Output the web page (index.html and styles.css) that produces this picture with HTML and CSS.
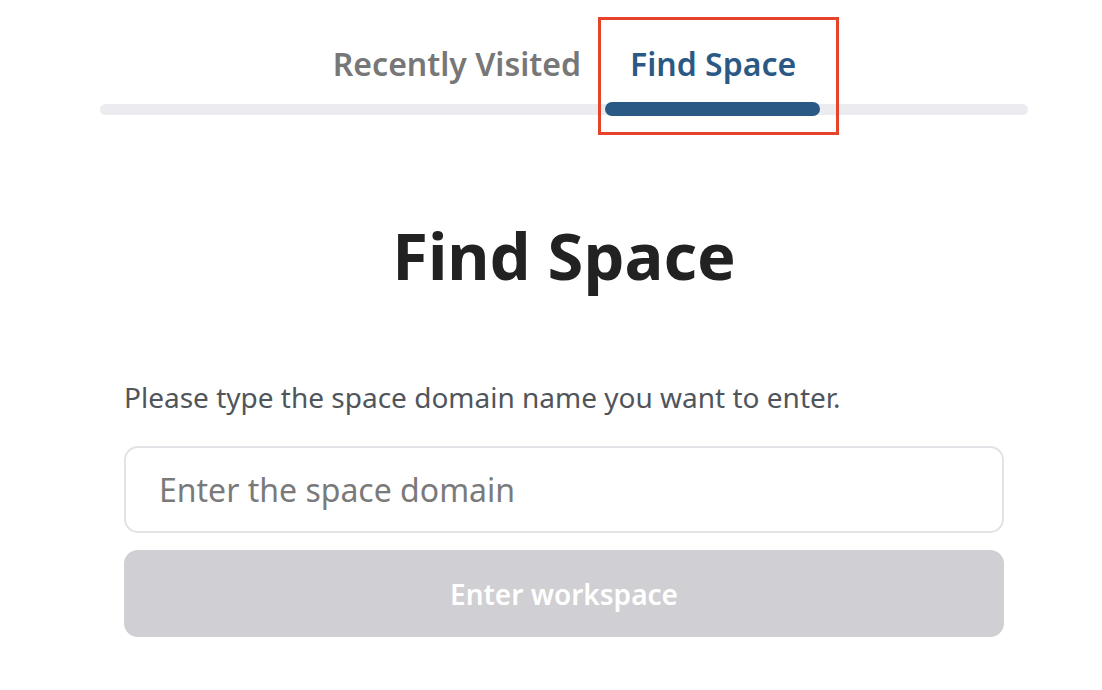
FILE: index.html
```html
<!DOCTYPE html>
<html lang="en">
<head>
<meta charset="utf-8">
<title>Find Space</title>
<link rel="stylesheet" href="styles.css">
</head>
<body>
<div class="page">
  <nav class="tabs">
    <div class="tab-row">
      <button class="tab">Recently Visited</button>
      <button class="tab tab-active">Find Space<span class="tab-indicator"></span><span class="tab-highlight"></span></button>
    </div>
    <div class="tab-track"></div>
  </nav>
  <main class="panel">
    <h1 class="title">Find Space</h1>
    <p class="hint">Please type the space domain name you want to enter.</p>
    <input class="domain-input" type="text" placeholder="Enter the space domain">
    <button class="enter-btn" disabled>Enter workspace</button>
  </main>
</div>
</body>
</html>
```

FILE: styles.css
```css
* { box-sizing: border-box; }

html, body {
  margin: 0;
  background: #ffffff;
  font-family: "Noto Sans", "Open Sans", sans-serif;
}

.page {
  width: 928px;
  margin-left: 100px;
  padding-top: 38px;
}

.tabs {
  position: relative;
}

.tab-row {
  display: flex;
  justify-content: center;
}

.tab {
  position: relative;
  border: 0;
  background: none;
  font-family: inherit;
  font-size: 32px;
  font-weight: 600;
  color: #777777;
  padding: 0 24px 0 25px;
  height: 52px;
  line-height: 52px;
  cursor: pointer;
}

.tab-active {
  color: #2b5985;
}

.tab-indicator {
  position: absolute;
  left: 0;
  right: 0;
  top: 64px;
  height: 14px;
  border-radius: 7px;
  background: #2b5985;
  z-index: 2;
}

.tab-highlight {
  position: absolute;
  left: -7px;
  right: -19px;
  top: -21px;
  height: 118px;
  border: 3px solid #e6432b;
  z-index: 3;
  pointer-events: none;
}

.tab-track {
  margin-top: 14px;
  height: 11px;
  border-radius: 6px;
  background: #ececf0;
}

.panel {
  padding: 0 24px;
  display: flex;
  flex-direction: column;
}

.title {
  margin: 100px 0 0;
  text-align: center;
  font-size: 65px;
  font-weight: 700;
  color: #222222;
  line-height: 80px;
}

.hint {
  margin: 84px 0 0;
  font-size: 28px;
  color: #50555c;
  line-height: 36px;
}

.domain-input {
  margin-top: 31px;
  height: 87px;
  width: 100%;
  border: 2px solid #e4e2e7;
  border-radius: 14px;
  padding: 0 33px;
  font-family: inherit;
  font-size: 32px;
  color: #333333;
  outline: none;
}

.domain-input::placeholder {
  color: #7a7a7a;
}

.enter-btn {
  margin-top: 17px;
  height: 87px;
  width: 100%;
  border: 0;
  border-radius: 14px;
  background: #d0cfd3;
  color: #ffffff;
  font-family: inherit;
  font-size: 28px;
  font-weight: 600;
}
```
